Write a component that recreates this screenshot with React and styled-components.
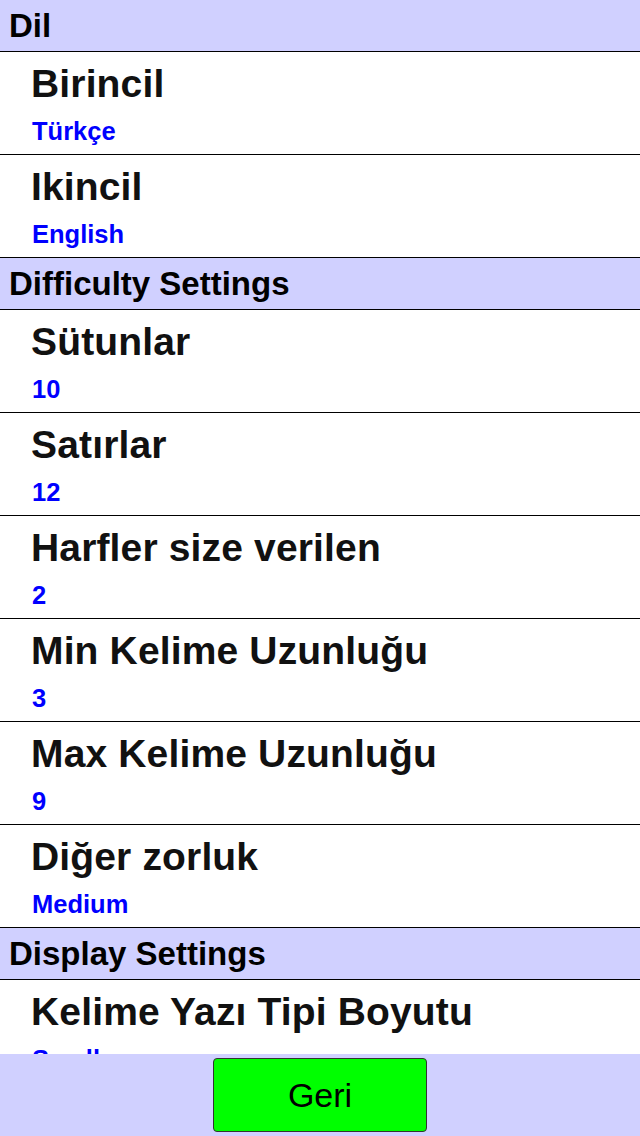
import React from "react"
import styled, { createGlobalStyle } from "styled-components"

const lavender = "#d0d0ff"
const blue = "#0000ff"

const GlobalStyle = createGlobalStyle`
    html, body {
        margin: 0;
        padding: 0;
        background: #ffffff;
        font-family: "Liberation Sans", Arial, sans-serif;
    }
`

const sections = [
    {
        title: "Dil",
        items: [
            { label: "Birincil", value: "Türkçe" },
            { label: "Ikincil", value: "English" },
        ],
    },
    {
        title: "Difficulty Settings",
        items: [
            { label: "Sütunlar", value: "10" },
            { label: "Satırlar", value: "12" },
            { label: "Harfler size verilen", value: "2" },
            { label: "Min Kelime Uzunluğu", value: "3" },
            { label: "Max Kelime Uzunluğu", value: "9" },
            { label: "Diğer zorluk", value: "Medium" },
        ],
    },
    {
        title: "Display Settings",
        items: [
            { label: "Kelime Yazı Tipi Boyutu", value: "Small" },
            { label: "Izgara Yazı Tipi Boyutu", value: "Medium" },
        ],
    },
]

export default function App() {
    return (
        <>
            <GlobalStyle />
            <Page>
                {sections.map(section => (
                    <section key={section.title}>
                        <SectionHeader>{section.title}</SectionHeader>
                        {section.items.map(item => (
                            <Item key={item.label}>
                                <Label>{item.label}</Label>
                                <Value>{item.value}</Value>
                            </Item>
                        ))}
                    </section>
                ))}
            </Page>
            <Footer>
                <BackButton>Geri</BackButton>
            </Footer>
        </>
    )
}

const Page = styled.div`
    display: flex;
    flex-direction: column;
    padding-bottom: 82px;
`

const SectionHeader = styled.div`
    height: 51px;
    line-height: 51px;
    padding-left: 9px;
    background: ${lavender};
    border-bottom: 1px solid #000;
    font-size: 33px;
    font-weight: bold;
    color: #000;
    white-space: nowrap;
`

const Item = styled.div`
    display: flex;
    flex-direction: column;
    gap: 10px;
    padding: 10px 0 8px 31px;
    border-bottom: 1px solid #000;
    background: #fff;
`

const Label = styled.div`
    font-size: 39px;
    line-height: 44px;
    font-weight: bold;
    letter-spacing: 0.15px;
    color: #111;
    white-space: nowrap;
`

const Value = styled.div`
    font-size: 25.5px;
    line-height: 30px;
    font-weight: bold;
    color: ${blue};
    padding-left: 1px;
`

const Footer = styled.div`
    position: fixed;
    left: 0;
    right: 0;
    bottom: 0;
    height: 82px;
    background: ${lavender};
    display: flex;
    align-items: center;
    justify-content: center;
`

const BackButton = styled.button`
    width: 214px;
    height: 74px;
    background: #00ff00;
    border: 1px solid #333;
    border-radius: 4px;
    font-family: "Liberation Sans", Arial, sans-serif;
    font-size: 34px;
    color: #000;
    padding: 0;
    cursor: pointer;
`
